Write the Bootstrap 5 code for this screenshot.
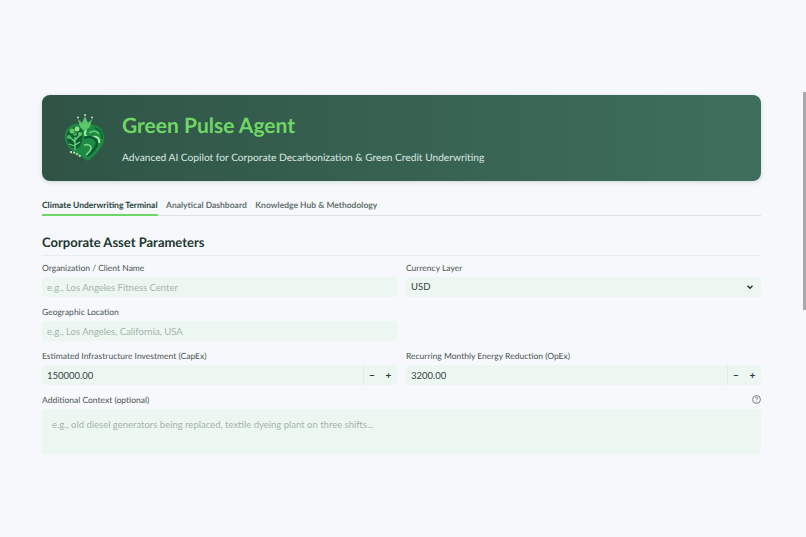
<!DOCTYPE html>
<html lang="en">
<head>
    <meta charset="UTF-8">
    <meta name="viewport" content="width=device-width, initial-scale=1.0">
    <link href="https://cdn.jsdelivr.net/npm/bootstrap@5.3.3/dist/css/bootstrap.min.css" rel="stylesheet">
    <script src="https://cdn.jsdelivr.net/npm/bootstrap@5.3.3/dist/js/bootstrap.bundle.min.js"></script>
    <title>Green Pulse Agent</title>
    <style>
        html, body { height: 100%; overflow: hidden; }
        body { background: #f6f8fc; font-family: Lato, "Liberation Sans", sans-serif; color: #2b3a35; text-rendering: geometricPrecision; }
        .page { padding: 95px 45px 0 42px; }
        .hero { height: 86px; background: linear-gradient(90deg, #2f5446, #3f6f5c); border-radius: 8px; padding: 0 12px 0 22px; box-shadow: 0 1px 4px rgba(30, 60, 50, .18); }
        .hero h1 { font-size: 21px; font-weight: 700; color: #6fd765; margin: 0 0 12px; line-height: 26px; }
        .hero p { font-size: 10.2px; color: #dbe8e2; margin: 0; line-height: 14px; }
        .hero-text { margin-top: 2px; }
        .tabs { margin-top: 18px; border-bottom: 1px solid #dde2e3; }
        .tabs .nav-link { font-size: 8.5px; font-weight: 700; color: #66726f; padding: 0 0 2px; line-height: 13px; margin-right: 8.5px; border: 0; border-bottom: 2px solid transparent; margin-bottom: -1px; background: none; border-radius: 0; }
        .tabs .nav-link.active { color: #26423a; border-bottom-color: #6fd765; background: none; }
        .section-title { font-size: 13px; font-weight: 700; color: #21352e; margin: 18px 0 6px; padding-bottom: 4px; line-height: 17px; border-bottom: 1px solid #e8ecee; }
        .form-grid { row-gap: 9px; --bs-gutter-x: 9px; }
        .form-label { font-size: 8.5px; line-height: 13px; color: #4a5551; margin: 0 0 2px; display: block; }
        .form-control, .form-select { background-color: #ecf7f1; border: 0; border-radius: 4px; font-size: 9.5px; line-height: 14px; color: #35423e; height: 20px; min-height: 20px; padding: 0 5px; box-shadow: none; }
        .form-control::placeholder { color: #a6b3ad; opacity: 1; }
        .form-select { background-image: url("data:image/svg+xml,%3csvg xmlns='http://www.w3.org/2000/svg' viewBox='0 0 16 16'%3e%3cpath fill='none' stroke='%23253530' stroke-width='3' d='M3 5.500l5 5 5-5'/%3e%3c/svg%3e"); background-size: 8px 8px; background-position: right 7px center; }
        .step-group .form-control { border-radius: 4px 0 0 4px; }
        .step-btn { width: 17px; height: 20px; padding: 0; border: 0; background: #ecf7f1; color: #2b3a35; font-size: 10px; font-weight: 700; line-height: 20px; border-radius: 0; }
        .step-btn.minus { border-left: 1px solid #e4eee9; }
        .step-btn.plus { border-radius: 0 4px 4px 0; }
        textarea.form-control { height: 45px; padding: 9px 10px; resize: none; border-radius: 4px; }
        .help-icon { width: 9px; height: 9px; color: #59635f; }
        .scroll-thumb { position: fixed; top: 92px; right: 0; width: 3px; height: 218px; background: #a9a9ab; }
    </style>
</head>
<body>
<div class="page">
    <div class="hero d-flex align-items-center gap-3">
        <svg width="42" height="48" viewBox="0 0 42 48" class="flex-shrink-0">
            <path d="M21 13C18 10 14 9 10 10 4 12 0 18 1 25c1 8 9 13 15 17l8 5c6-5 14-12 16-21 1-8-3-14-10-15-4-1-7 0-9 2z" fill="#1f8a45"/>
            <path d="M16 13l-2-8 4 4 3-7 3 7 4-4-2 8-5 4z" fill="#58c765"/>
            <circle cx="14" cy="3.500" r=".9" fill="#e2f5d4"/><circle cx="21" cy=".9" r=".9" fill="#e2f5d4"/><circle cx="28" cy="3.500" r=".9" fill="#e2f5d4"/>
            <path d="M22 16c-3 6 1 8 6 7 5-1 8 1 7 6" fill="none" stroke="#9ee79b" stroke-width="2.200"/>
            <path d="M20 24c5-2 12-1 13 5 0 5-5 9-10 13" fill="none" stroke="#0b5a30" stroke-width="2.600"/>
            <path d="M20 31c4-1 7 0 7 3s-3 5-5 7" fill="none" stroke="#72d77d" stroke-width="1.800"/>
            <path d="M31 14c5 1 8 6 7 11" fill="none" stroke="#0e6a38" stroke-width="2"/>
            <path d="M25 19c4-3 8-2 10 1" fill="none" stroke="#67d070" stroke-width="1.500"/>
            <path d="M3 20c2-6 8-8 13-6 3 3 3 9 1 16-1 4-6 6-9 4-4-3-6-9-5-14z" fill="#0f5f34"/>
            <path d="M11 36V23M11 28l-5-5M11 26l5-5M11 32l-6-2M11 31l5-3" fill="none" stroke="#6fd47a" stroke-width="1.300"/>
            <circle cx="8" cy="17" r="2.500" fill="#63c765"/><circle cx="13" cy="15" r="2.500" fill="#8ce08b"/><circle cx="5" cy="23" r="2" fill="#52bb5f"/><circle cx="16" cy="20" r="2" fill="#63c765"/><circle cx="11" cy="20" r="2" fill="#3fa852"/>
            <path d="M6 38c4 0 8 2 11 5" fill="none" stroke="#b4ecb0" stroke-width="2" stroke-dasharray="2 1.200"/>
        </svg>
        <div class="hero-text">
            <h1>Green Pulse Agent</h1>
            <p>Advanced AI Copilot for Corporate Decarbonization &amp; Green Credit Underwriting</p>
        </div>
    </div>

    <ul class="nav tabs">
        <li class="nav-item"><a class="nav-link active" href="#">Climate Underwriting Terminal</a></li>
        <li class="nav-item"><a class="nav-link" href="#">Analytical Dashboard</a></li>
        <li class="nav-item"><a class="nav-link" href="#">Knowledge Hub &amp; Methodology</a></li>
    </ul>

    <h2 class="section-title">Corporate Asset Parameters</h2>

    <div class="row form-grid">
        <div class="col-6">
            <label class="form-label">Organization / Client Name</label>
            <input type="text" class="form-control" placeholder="e.g., Los Angeles Fitness Center">
        </div>
        <div class="col-6">
            <label class="form-label">Currency Layer</label>
            <select class="form-select"><option>USD</option></select>
        </div>
        <div class="col-6">
            <label class="form-label">Geographic Location</label>
            <input type="text" class="form-control" placeholder="e.g., Los Angeles, California, USA">
        </div>
        <div class="col-6"></div>
        <div class="col-6">
            <label class="form-label">Estimated Infrastructure Investment (CapEx)</label>
            <div class="d-flex step-group">
                <input type="text" class="form-control" value="150000.00">
                <button class="step-btn minus flex-shrink-0">&minus;</button>
                <button class="step-btn plus flex-shrink-0">+</button>
            </div>
        </div>
        <div class="col-6">
            <label class="form-label">Recurring Monthly Energy Reduction (OpEx)</label>
            <div class="d-flex step-group">
                <input type="text" class="form-control" value="3200.00">
                <button class="step-btn minus flex-shrink-0">&minus;</button>
                <button class="step-btn plus flex-shrink-0">+</button>
            </div>
        </div>
        <div class="col-12">
            <div class="d-flex justify-content-between align-items-center">
                <label class="form-label">Additional Context (optional)</label>
                <svg class="help-icon mb-1" viewBox="0 0 16 16" fill="none" stroke="currentColor" stroke-width="1.400">
                    <circle cx="8" cy="8" r="7"/>
                    <path d="M5.800 6.200C5.800 4.900 6.800 4.200 8 4.200s2.200.8 2.200 1.900c0 1.600-2.200 1.600-2.200 3.300"/>
                    <path d="M8 11v1.300"/>
                </svg>
            </div>
            <textarea class="form-control" placeholder="e.g., old diesel generators being replaced, textile dyeing plant on three shifts..."></textarea>
        </div>
    </div>
</div>
<div class="scroll-thumb"></div>
</body>
</html>
